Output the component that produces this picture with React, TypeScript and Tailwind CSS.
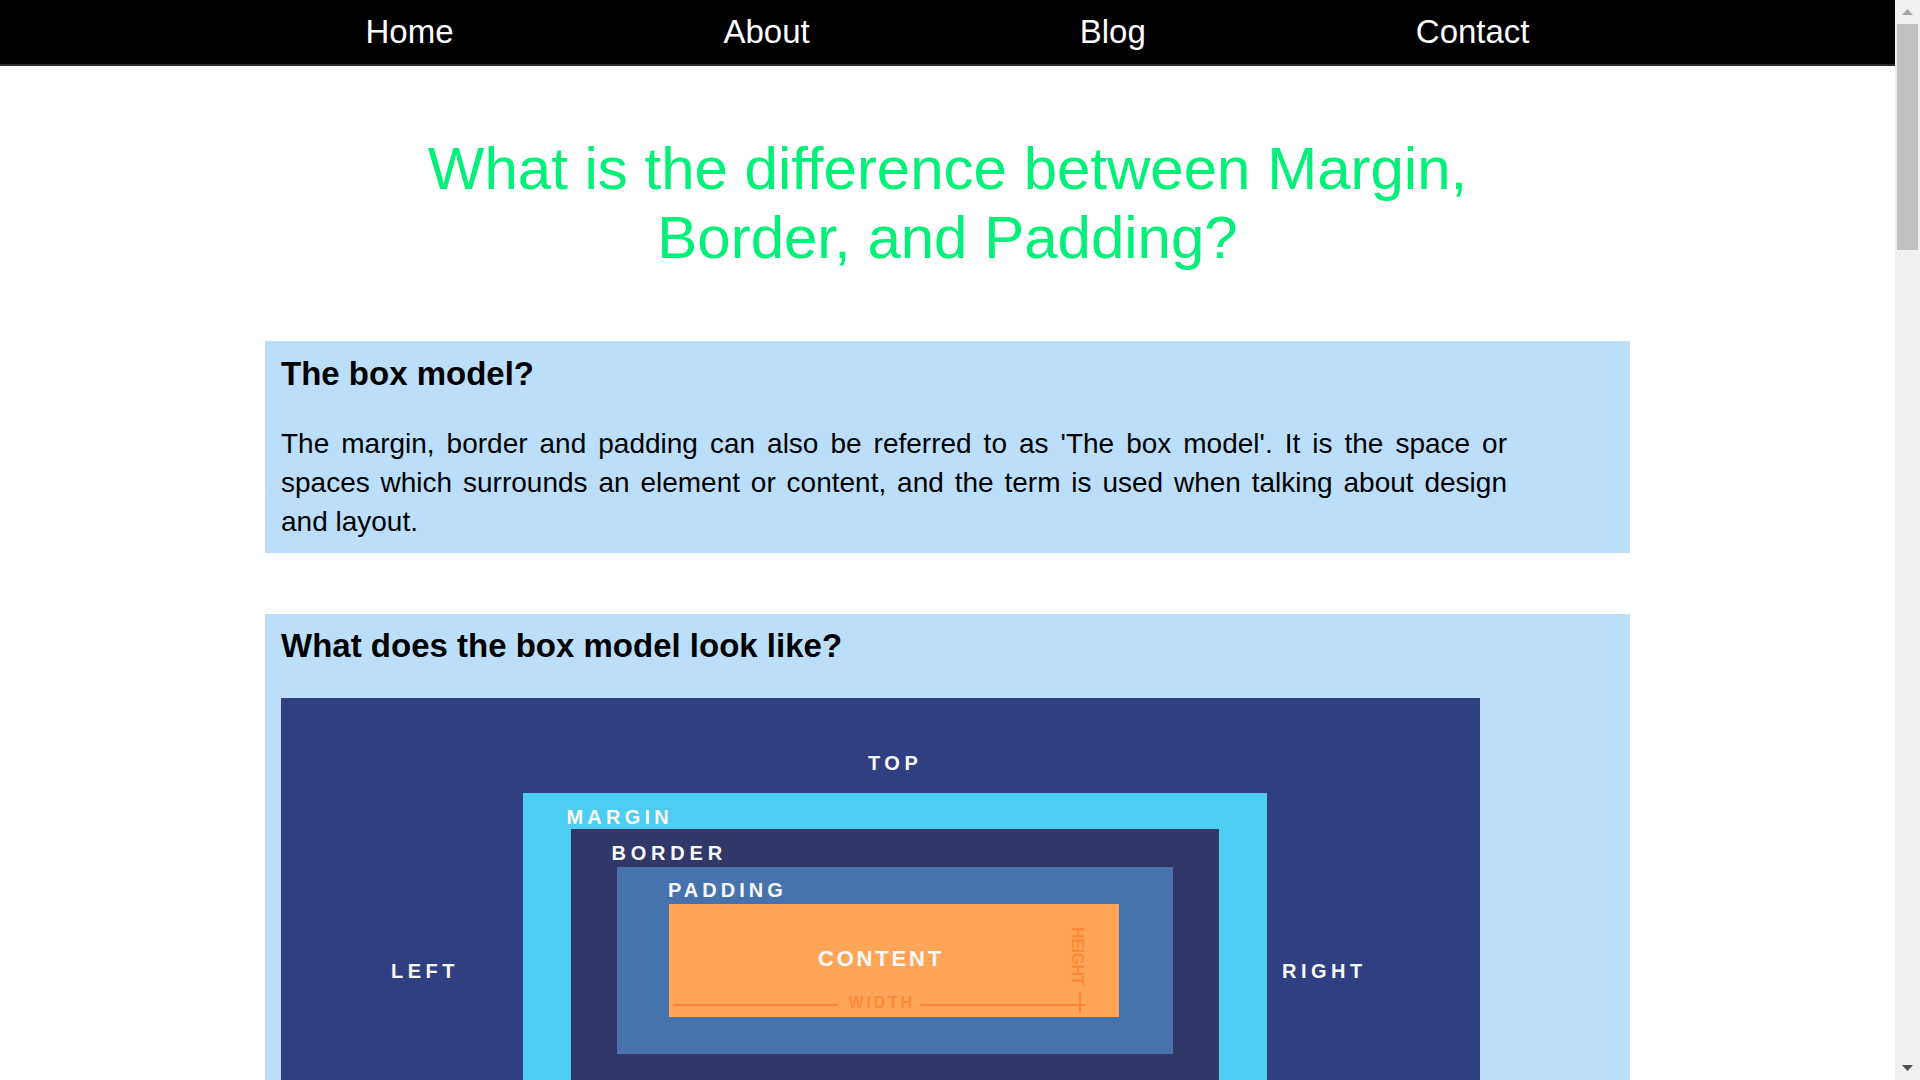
import React from "react";

function Label({ className, children }: { className: string; children: React.ReactNode }) {
  return (
    <span className={"absolute whitespace-nowrap font-bold leading-none text-[#f8f8f8] " + className}>
      {children}
    </span>
  );
}

function BoxModelDiagram() {
  return (
    <div className="relative w-[1199px] h-[525px] bg-[#2f3f81] pt-[95px] pl-[242px]">
      <Label className="left-[587px] top-[55px] text-[20px] tracking-[4.5px]">TOP</Label>
      <Label className="left-[110px] top-[263px] text-[20px] tracking-[4.5px]">LEFT</Label>
      <Label className="left-[1001px] top-[263px] text-[20px] tracking-[4.5px]">RIGHT</Label>
      <Label className="left-[575px] top-[457px] text-[20px] tracking-[4.5px]">BOTTOM</Label>
      <div className="relative w-[744px] bg-[#4ecdf3] pt-[36px] px-[48px] pb-[36px]">
        <Label className="left-[43.5px] top-[13.5px] text-[20px] tracking-[4.2px]">MARGIN</Label>
        <div className="relative bg-[#313869] pt-[38px] px-[46px] pb-[38px]">
          <Label className="left-[40.5px] top-[13.5px] text-[20px] tracking-[4.8px]">BORDER</Label>
          <div className="relative bg-[#4673ae] pt-[37px] pl-[52px] pb-[37px]">
            <Label className="left-[51px] top-[13px] text-[20px] tracking-[4px]">PADDING</Label>
            <div className="relative w-[450px] h-[113px] bg-[#ffa557]">
              <Label className="left-[149px] top-[44px] text-[22px] tracking-[2.8px]">CONTENT</Label>
              <span className="absolute left-[179.5px] top-[90.5px] whitespace-nowrap text-[16px] leading-none font-bold tracking-[2.8px] text-[#ff8a36]">
                WIDTH
              </span>
              <span className="absolute left-[400px] top-[23px] whitespace-nowrap text-[16px] leading-none font-bold tracking-[-0.4px] text-[#ff8a36] [writing-mode:vertical-rl]">
                HEIGHT
              </span>
              <div className="absolute left-[4px] top-[99.5px] w-[165px] h-[2px] bg-[#ff8533]" />
              <div className="absolute left-[251px] top-[99.5px] w-[165px] h-[2px] bg-[#ff8533]" />
              <div className="absolute left-[409.5px] top-[89px] w-[2px] h-[20px] bg-[#ff8533]" />
            </div>
          </div>
        </div>
      </div>
    </div>
  );
}

function InfoBox({ title, children, className = "" }: { title: string; children: React.ReactNode; className?: string }) {
  return (
    <section className={"bg-[#bbdefb] pt-[14px] px-[16px] pb-[12.5px] " + className}>
      <h2 className="text-[33px] leading-[38px] font-bold">{title}</h2>
      {children}
    </section>
  );
}

function Scrollbar() {
  return (
    <aside className="w-[25px] shrink-0 bg-[#f0f0f0] flex flex-col items-center">
      <div className="h-[24px] w-full flex items-center justify-center">
        <svg width="11" height="6" viewBox="0 0 11 6">
          <path d="M5.5 0 L11 6 L0 6 Z" fill="#a3a3a3" />
        </svg>
      </div>
      <div className="h-[226px] w-[21px] bg-[#c1c1c1]" />
      <div className="flex-1" />
      <div className="h-[24px] w-full flex items-center justify-center">
        <svg width="11" height="6" viewBox="0 0 11 6">
          <path d="M0 0 L11 0 L5.5 6 Z" fill="#505050" />
        </svg>
      </div>
    </aside>
  );
}

export default function App() {
  return (
    <div className="flex h-screen bg-white font-['Liberation_Sans',Arial,sans-serif] text-black">
      <div className="flex-1 overflow-y-auto">
        <div className="min-h-[4960px]">
          <nav className="h-[66px] bg-black border-b-2 border-[#2a2a2a]">
            <ul className="mx-auto w-[1365px] flex justify-center gap-[270px] pt-[13px] text-[33px] leading-[38px] text-white">
              <li>Home</li>
              <li>About</li>
              <li>Blog</li>
              <li>Contact</li>
            </ul>
          </nav>

          <main className="mx-auto w-[1365px] pb-[80px]">
            <h1 className="mx-auto mt-[68px] w-[1100px] text-center text-[60px] leading-[69px] font-normal text-[#00f078]">
              What is the difference between Margin, Border, and Padding?
            </h1>

            <InfoBox title="The box model?" className="mt-[69px]">
              <p className="mt-[30.5px] w-[1226px] text-[28px] leading-[39px] text-justify">
                The margin, border and padding can also be referred to as 'The box model'. It is the space or
                spaces which surrounds an element or content, and the term is used when talking about design
                and layout.
              </p>
            </InfoBox>

            <section className="mt-[61px] bg-[#bbdefb] pt-[13px] px-[16px] pb-[16px]">
              <h2 className="text-[33px] leading-[38px] font-bold">What does the box model look like?</h2>
              <div className="mt-[33px]">
                <BoxModelDiagram />
              </div>
            </section>

            <InfoBox title="What is the margin?" className="mt-[61px]">
              <p className="mt-[30.5px] w-[1226px] text-[28px] leading-[39px] text-justify">
                The margin is the space around the outside of an element. It separates the element from the
                other elements around it, and it is always transparent, so the background of the parent shows
                through it.
              </p>
            </InfoBox>

            <InfoBox title="What is the border?" className="mt-[61px]">
              <p className="mt-[30.5px] w-[1226px] text-[28px] leading-[39px] text-justify">
                The border sits between the margin and the padding. It wraps the padding and the content, and it
                can be given a width, a style and a colour of its own.
              </p>
            </InfoBox>

            <InfoBox title="What is the padding?" className="mt-[61px]">
              <p className="mt-[30.5px] w-[1226px] text-[28px] leading-[39px] text-justify">
                The padding is the space between the content and the border. It takes the background colour of
                the element, and it gives the content room to breathe inside its box.
              </p>
            </InfoBox>
          </main>
        </div>
      </div>
      <Scrollbar />
    </div>
  );
}
